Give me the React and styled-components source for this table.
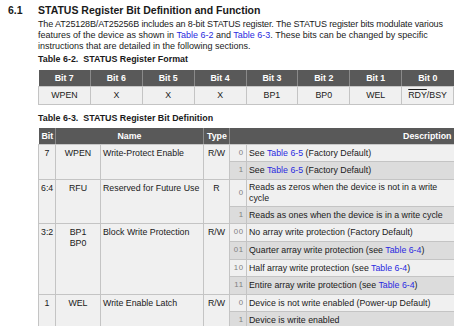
import React from 'react';
import styled, { createGlobalStyle } from 'styled-components';

const GlobalStyle = createGlobalStyle`
  body {
    margin: 0;
    background: #ffffff;
    font-family: "Liberation Sans", Arial, sans-serif;
    color: #1a1a1a;
  }
`;

const Page = styled.div`
  width: 454px;
  height: 326px;
  overflow: hidden;
  padding-top: 4px;
  box-sizing: border-box;
`;

const HeadingRow = styled.div`
  display: flex;
  font-weight: bold;
  font-size: 10.5px;
  line-height: 13px;
`;

const SectionNum = styled.span`
  width: 38px;
  padding-left: 8px;
  box-sizing: border-box;
`;

const Body = styled.div`
  padding-left: 38px;
`;

const Para = styled.p`
  margin: 2px 0 0;
  font-size: 9px;
  line-height: 11px;
`;

const Line = styled.span`
  display: block;
  white-space: nowrap;
  letter-spacing: ${(p) => (p.$tight ? '-0.13px' : 'normal')};
`;

const Link = styled.span`
  color: #2a2ae0;
`;

const Caption = styled.div`
  font-weight: bold;
  font-size: 8.9px;
  line-height: 12px;
  margin: ${(p) => p.$top}px 0 ${(p) => p.$bottom}px;
`;

const Table = styled.table`
  border-collapse: collapse;
  table-layout: fixed;
  width: 416px;
  font-size: 8.8px;
`;

const Th = styled.th`
  background: #595959;
  color: #ffffff;
  font-weight: bold;
  height: 16px;
  padding: 0 3px;
  text-align: ${(p) => p.$align || 'center'};
  border-left: 1px solid #8a8a8a;
  border-bottom: 1px solid #c8c8c8;
  &:first-child {
    border-left: none;
  }
`;

const Td = styled.td`
  background: ${(p) => (p.$shade ? '#dcdcdc' : '#f0f0f0')};
  border: 1px solid #c4c4c4;
  height: ${(p) => p.$h || 16.6}px;
  padding: 0 2px;
  line-height: 10.5px;
  vertical-align: ${(p) => (p.$top ? 'top' : 'middle')};
  text-align: ${(p) => p.$align || 'left'};
  padding-top: ${(p) => (p.$top ? 3 : 0)}px;
  color: ${(p) => (p.$muted ? '#808080' : '#1a1a1a')};
  font-size: ${(p) => (p.$small ? '7.8px' : 'inherit')};
  letter-spacing: ${(p) => (p.$small ? '0.8px' : 'normal')};
`;

const Over = styled.span`
  text-decoration: overline;
`;

const formatCols = ['Bit 7', 'Bit 6', 'Bit 5', 'Bit 4', 'Bit 3', 'Bit 2', 'Bit 1', 'Bit 0'];

const groups = [
  {
    bit: '7',
    name: 'WPEN',
    desc: 'Write-Protect Enable',
    type: 'R/W',
    rows: [
      { v: '0', text: <>See <Link>Table 6-5</Link> (Factory Default)</> },
      { v: '1', text: <>See <Link>Table 6-5</Link> (Factory Default)</> },
    ],
  },
  {
    bit: '6:4',
    name: 'RFU',
    desc: 'Reserved for Future Use',
    type: 'R',
    rows: [
      { v: '0', text: <>Reads as zeros when the device is not in a write<br />cycle</>, h: 26 },
      { v: '1', text: 'Reads as ones when the device is in a write cycle' },
    ],
  },
  {
    bit: '3:2',
    name: <>BP1<br />BP0</>,
    desc: 'Block Write Protection',
    type: 'R/W',
    rows: [
      { v: '00', text: 'No array write protection (Factory Default)' },
      { v: '01', text: <>Quarter array write protection (see <Link>Table 6-4</Link>)</> },
      { v: '10', text: <>Half array write protection (see <Link>Table 6-4</Link>)</> },
      { v: '11', text: <>Entire array write protection (see <Link>Table 6-4</Link>)</> },
    ],
  },
  {
    bit: '1',
    name: 'WEL',
    desc: 'Write Enable Latch',
    type: 'R/W',
    rows: [
      { v: '0', text: 'Device is not write enabled (Power-up Default)' },
      { v: '1', text: 'Device is write enabled' },
    ],
  },
];

export default function App() {
  return (
    <Page>
      <GlobalStyle />
      <HeadingRow>
        <SectionNum>6.1</SectionNum>
        <span>STATUS Register Bit Definition and Function</span>
      </HeadingRow>
      <Body>
        <Para>
          <Line $tight>The AT25128B/AT25256B includes an 8-bit STATUS register. The STATUS register bits modulate various</Line>
          <Line>features of the device as shown in <Link>Table 6-2</Link> and <Link>Table 6-3</Link>. These bits can be changed by specific</Line>
          <Line>instructions that are detailed in the following sections.</Line>
        </Para>
        <Caption $top={1} $bottom={5}>Table 6-2.&nbsp; STATUS Register Format</Caption>
        <Table>
          <thead>
            <tr>
              {formatCols.map((c) => (
                <Th key={c}>{c}</Th>
              ))}
            </tr>
          </thead>
          <tbody>
            <tr>
              {['WPEN', 'X', 'X', 'X', 'BP1', 'BP0', 'WEL'].map((c, i) => (
                <Td key={i} $align="center">{c}</Td>
              ))}
              <Td $align="center"><Over>RDY</Over>/BSY</Td>
            </tr>
          </tbody>
        </Table>
        <Caption $top={7} $bottom={4}>Table 6-3.&nbsp; STATUS Register Bit Definition</Caption>
        <Table>
          <colgroup>
            <col style={{ width: 17 }} />
            <col style={{ width: 45 }} />
            <col style={{ width: 103 }} />
            <col style={{ width: 26 }} />
            <col style={{ width: 17 }} />
            <col style={{ width: 208 }} />
          </colgroup>
          <thead>
            <tr>
              <Th $align="left">Bit</Th>
              <Th colSpan={2}>Name</Th>
              <Th $align="left">Type</Th>
              <Th colSpan={2} $align="right">Description</Th>
            </tr>
          </thead>
          <tbody>
            {groups.map((g) =>
              g.rows.map((r, i) => (
                <tr key={g.bit + r.v}>
                  {i === 0 && (
                    <>
                      <Td rowSpan={g.rows.length} $top $align="center">{g.bit}</Td>
                      <Td rowSpan={g.rows.length} $top $align="center">{g.name}</Td>
                      <Td rowSpan={g.rows.length} $top>{g.desc}</Td>
                      <Td rowSpan={g.rows.length} $top $align="center">{g.type}</Td>
                    </>
                  )}
                  <Td $align="right" $muted $small $shade={i % 2 === 1} $h={r.h}>{r.v}</Td>
                  <Td $shade={i % 2 === 1} $h={r.h}>{r.text}</Td>
                </tr>
              ))
            )}
          </tbody>
        </Table>
      </Body>
    </Page>
  );
}
